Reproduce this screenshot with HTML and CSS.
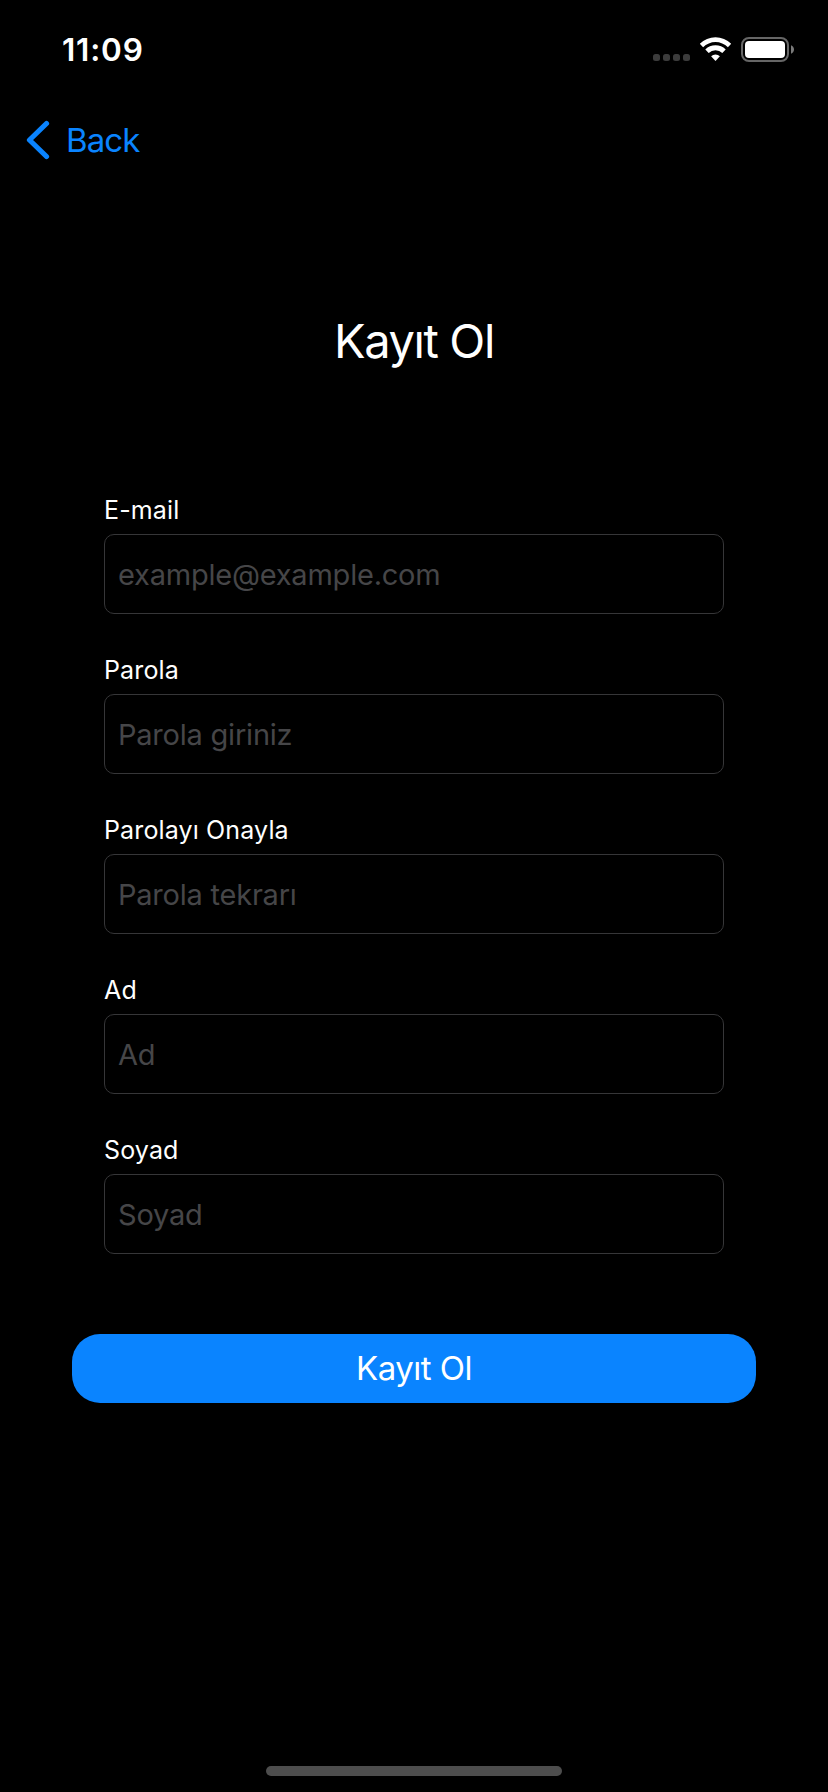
FILE: index.html
```html
<!DOCTYPE html>
<html lang="tr">
<head>
<meta charset="utf-8">
<title>Kayıt Ol</title>
<link rel="stylesheet" href="styles.css">
</head>
<body>
<div class="screen">
  <header class="status">
    <span class="time">11:09</span>
    <svg class="status-icons" width="144" height="28" viewBox="0 0 144 28">
      <g fill="#3c3c3c">
        <rect x="1" y="18" width="7" height="7" rx="2.5"/>
        <rect x="11" y="18" width="7" height="7" rx="2.5"/>
        <rect x="21" y="18" width="7" height="7" rx="2.5"/>
        <rect x="31" y="18" width="7" height="7" rx="2.5"/>
      </g>
      <g fill="#fff">
        <path d="M47.8 7.8a22.300 22.300 0 0 1 31.400 0l-3.300 3.400a17.600 17.600 0 0 0-24.800 0z"/>
        <path d="M53.300 13.500a14.500 14.500 0 0 1 20.400 0l-3.400 3.400a9.800 9.800 0 0 0-13.600 0z"/>
        <path d="M59.100 20.300a6.300 6.300 0 0 1 8.800 0l-4.400 4.800z"/>
      </g>
      <rect x="90" y="2" width="46" height="23" rx="7" fill="none" stroke="#666" stroke-width="2"/>
      <rect x="93" y="5" width="40" height="17" rx="4" fill="#fff"/>
      <path d="M139 9.200q3 1.400 3 4.300t-3 4.300z" fill="#7a7a7a"/>
    </svg>
  </header>
  <nav class="nav">
    <svg width="24" height="40" viewBox="0 0 24 40"><path d="M20.500 3.500L3.500 20l17 16.500" fill="none" stroke="#0a84ff" stroke-width="5.200" stroke-linecap="round" stroke-linejoin="round"/></svg>
    <a class="back">Back</a>
  </nav>
  <h1 class="title">Kayıt Ol</h1>
  <form class="form">
    <label class="field"><span class="label">E-mail</span><input class="input" type="email" placeholder="example@example.com"></label>
    <label class="field"><span class="label">Parola</span><input class="input" type="password" placeholder="Parola giriniz"></label>
    <label class="field"><span class="label">Parolayı Onayla</span><input class="input" type="password" placeholder="Parola tekrarı"></label>
    <label class="field"><span class="label">Ad</span><input class="input" type="text" placeholder="Ad"></label>
    <label class="field"><span class="label">Soyad</span><input class="input" type="text" placeholder="Soyad"></label>
  </form>
  <button class="submit">Kayıt Ol</button>
  <div class="home"></div>
</div>
</body>
</html>
```
FILE: styles.css
```css
* { box-sizing: border-box; }
body { margin: 0; background: #000; font-family: Inter, "Liberation Sans", sans-serif; color: #fff; }
.screen { display: flex; flex-direction: column; width: 828px; height: 1792px; background: #000; overflow: hidden; }
.status { display: flex; justify-content: space-between; height: 70px; padding: 30px 32px 0 62px; }
.time { font-size: 31.5px; line-height: 40px; font-weight: 600; letter-spacing: 0.8px; }
.status-icons { display: block; margin-top: 6px; }
.nav { display: flex; align-items: center; height: 44px; margin-top: 48px; padding-left: 26px; }
.back { margin-left: 16px; font-size: 33px; line-height: 44px; letter-spacing: -0.9px; color: #0a84ff; }
.title { margin: 149px 0 0; font-size: 47px; line-height: 60px; font-weight: 400; letter-spacing: -1.4px; text-align: center; }
.form { display: flex; flex-direction: column; gap: 39px; margin: 122px 104px 0; }
.field { display: flex; flex-direction: column; gap: 7px; }
.label { font-size: 25px; line-height: 34px; letter-spacing: 0.14px; }
.input { width: 100%; height: 80px; padding: 0 13px; border: 1px solid #363638; border-radius: 10px; background: #000; color: #fff; font: 400 29px Inter, "Liberation Sans", sans-serif; letter-spacing: -0.22px; outline: none; }
.input::placeholder { color: #464648; opacity: 1; }
.submit { height: 69px; margin: 80px 72px 0; padding: 0 0 2px; border: 0; border-radius: 28px; background: #0a84ff; color: #fff; font: 400 33px Inter, "Liberation Sans", sans-serif; letter-spacing: -0.5px; }
.home { width: 296px; height: 10px; margin: auto auto 16px; border-radius: 5px; background: #4d4d4d; }
```
